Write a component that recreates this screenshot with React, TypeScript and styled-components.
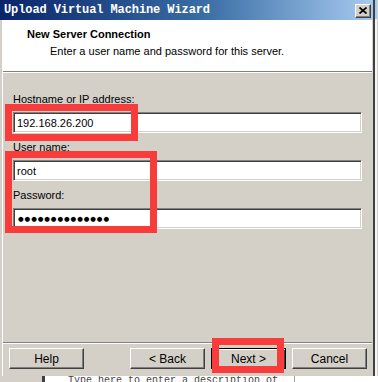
import React from 'react';
import styled, { createGlobalStyle } from 'styled-components';

const GlobalStyle = createGlobalStyle`
  html, body {
    margin: 0;
    padding: 0;
    background: #f2f2f2;
    font-family: "Liberation Sans", Arial, sans-serif;
    font-size: 11px;
  }
`;

const Screen = styled.div`
  position: relative;
  width: 378px;
  height: 382px;
  overflow: hidden;
  background: #f2f2f2;
`;

const TopRow = styled.div`
  display: flex;
`;

const Window = styled.div`
  display: flex;
  flex-direction: column;
  width: 375px;
  height: 376px;
  box-sizing: border-box;
  background: #d4d0c8;
  border-right: 2px solid #404040;
`;

const OtherWindow = styled.div`
  flex: 1;
  background: linear-gradient(#a6caf0 0 19px, #f4f4f4 19px);
  border-right: 1px solid #d0d0d0;
`;

const TitleBar = styled.div`
  display: flex;
  align-items: center;
  justify-content: space-between;
  height: 20px;
  padding: 0 2px 0 4px;
  background: linear-gradient(to right, #0a246a 0%, #3a6ea5 55%, #a6caf0 100%);
`;

const Title = styled.span`
  color: #fff;
  font-family: "Liberation Mono", "Courier New", monospace;
  font-weight: bold;
  font-size: 12px;
  letter-spacing: -0.1px;
`;

const CloseButton = styled.div`
  display: flex;
  align-items: center;
  justify-content: center;
  width: 16px;
  height: 14px;
  box-sizing: border-box;
  margin-top: 1px;
  background: #d4d0c8;
  border-top: 1px solid #fff;
  border-left: 1px solid #fff;
  border-right: 1px solid #404040;
  border-bottom: 1px solid #404040;
  box-shadow: inset -1px -1px 0 #808080;
`;

const Panel = styled.div`
  flex: 1;
  display: flex;
  flex-direction: column;
  margin: 0 1px 0 2px;
  border-left: 1px solid #fff;
`;

const Header = styled.div`
  height: 52px;
  padding: 8px 0 0 24px;
  box-sizing: border-box;
  background: #fff;
  border-bottom: 1px solid #808080;
  box-shadow: 0 1px 0 #fff;
`;

const HeaderTitle = styled.div`
  font-weight: bold;
  line-height: 13px;
  color: #000;
`;

const HeaderText = styled.div`
  margin: 4px 0 0 23px;
  line-height: 13px;
  color: #000;
`;

const Body = styled.div`
  flex: 1;
  display: flex;
  flex-direction: column;
  padding: 21px 10px 0 10px;
`;

const Label = styled.div<{ $first?: boolean }>`
  line-height: 13px;
  margin-top: ${(p) => (p.$first ? '0' : '8px')};
  color: #000;
`;

const Field = styled.div<{ $secret?: boolean }>`
  display: flex;
  align-items: center;
  height: 21px;
  margin-top: 6px;
  padding-left: ${(p) => (p.$secret ? '4px' : '3px')};
  box-sizing: border-box;
  background: #fff;
  border-top: 1px solid #808080;
  border-left: 1px solid #808080;
  border-right: 1px solid #fff;
  border-bottom: 1px solid #fff;
  box-shadow: inset 1px 1px 0 #404040, inset -1px -1px 0 #d4d0c8;
  color: #000;
  font-family: ${(p) => (p.$secret ? '"DejaVu Sans", sans-serif' : 'inherit')};
  font-size: ${(p) => (p.$secret ? '6.5px' : '11px')};
  letter-spacing: ${(p) => (p.$secret ? '0.9px' : '0')};
`;

const Footer = styled.div`
  display: flex;
  align-items: flex-start;
  gap: 6px;
  height: 34px;
  padding: 5px 5px 0 6px;
  box-sizing: border-box;
  border-top: 1px solid #808080;
  box-shadow: inset 0 1px 0 #fff;
`;

const Spacer = styled.div`
  flex: 1;
`;

const Button = styled.div<{ $default?: boolean }>`
  display: flex;
  align-items: center;
  justify-content: center;
  width: 75px;
  height: 21px;
  box-sizing: border-box;
  background: #d4d0c8;
  color: #000;
  font-size: 12px;
  border: 1px solid ${(p) => (p.$default ? '#000' : '#404040')};
  border-top-color: ${(p) => (p.$default ? '#000' : '#fff')};
  border-left-color: ${(p) => (p.$default ? '#000' : '#fff')};
  box-shadow: ${(p) =>
    p.$default
      ? 'inset 1px 1px 0 #fff, inset -1px -1px 0 #404040, inset -2px -2px 0 #808080'
      : 'inset -1px -1px 0 #808080'};
`;

const BottomStrip = styled.div`
  display: flex;
  height: 6px;
  overflow: hidden;
  background: #d4d0c8;
`;

const StripGutter = styled.div`
  width: 42px;
  border-right: 3px solid #404040;
`;

const StripPage = styled.div`
  width: 250px;
  background: #fff;
  border-right: 1px solid #a0a0a0;
  padding-left: 23px;
  box-sizing: border-box;
  font-family: "Liberation Mono", "Courier New", monospace;
  font-size: 10px;
  line-height: 10px;
  color: #444;
  white-space: nowrap;
`;

const StripRest = styled.div`
  flex: 1;
  background: #fff;
`;

const Marker = styled.div`
  position: absolute;
  box-sizing: border-box;
  border: 7px solid #f83b3b;
  pointer-events: none;
`;

const markers = [
  { left: 5, top: 104, width: 133, height: 37 },
  { left: 5, top: 151, width: 152, height: 82 },
  { left: 212, top: 338, width: 72, height: 35 },
];

function App() {
  return (
    <Screen>
      <GlobalStyle />
      <TopRow>
        <Window>
          <TitleBar>
            <Title>Upload Virtual Machine Wizard</Title>
            <CloseButton>
              <svg width="8" height="7" viewBox="0 0 8 7">
                <path d="M0.5 0.5 L7.5 6.5 M7.5 0.5 L0.5 6.5" stroke="#000" strokeWidth="1.7" />
              </svg>
            </CloseButton>
          </TitleBar>
          <Panel>
            <Header>
              <HeaderTitle>New Server Connection</HeaderTitle>
              <HeaderText>Enter a user name and password for this server.</HeaderText>
            </Header>
            <Body>
              <Label $first>Hostname or IP address:</Label>
              <Field>192.168.26.200</Field>
              <Label>User name:</Label>
              <Field>root</Field>
              <Label>Password:</Label>
              <Field $secret>{'●'.repeat(14)}</Field>
            </Body>
            <Footer>
              <Button>Help</Button>
              <Spacer />
              <Button>&lt; Back</Button>
              <Button $default>Next &gt;</Button>
              <Button>Cancel</Button>
            </Footer>
          </Panel>
        </Window>
        <OtherWindow />
      </TopRow>
      <BottomStrip>
        <StripGutter />
        <StripPage>Type here to enter a description of</StripPage>
        <StripRest />
      </BottomStrip>
      {markers.map((m, i) => (
        <Marker key={i} style={{ left: m.left, top: m.top, width: m.width, height: m.height }} />
      ))}
    </Screen>
  );
}

export default App;
